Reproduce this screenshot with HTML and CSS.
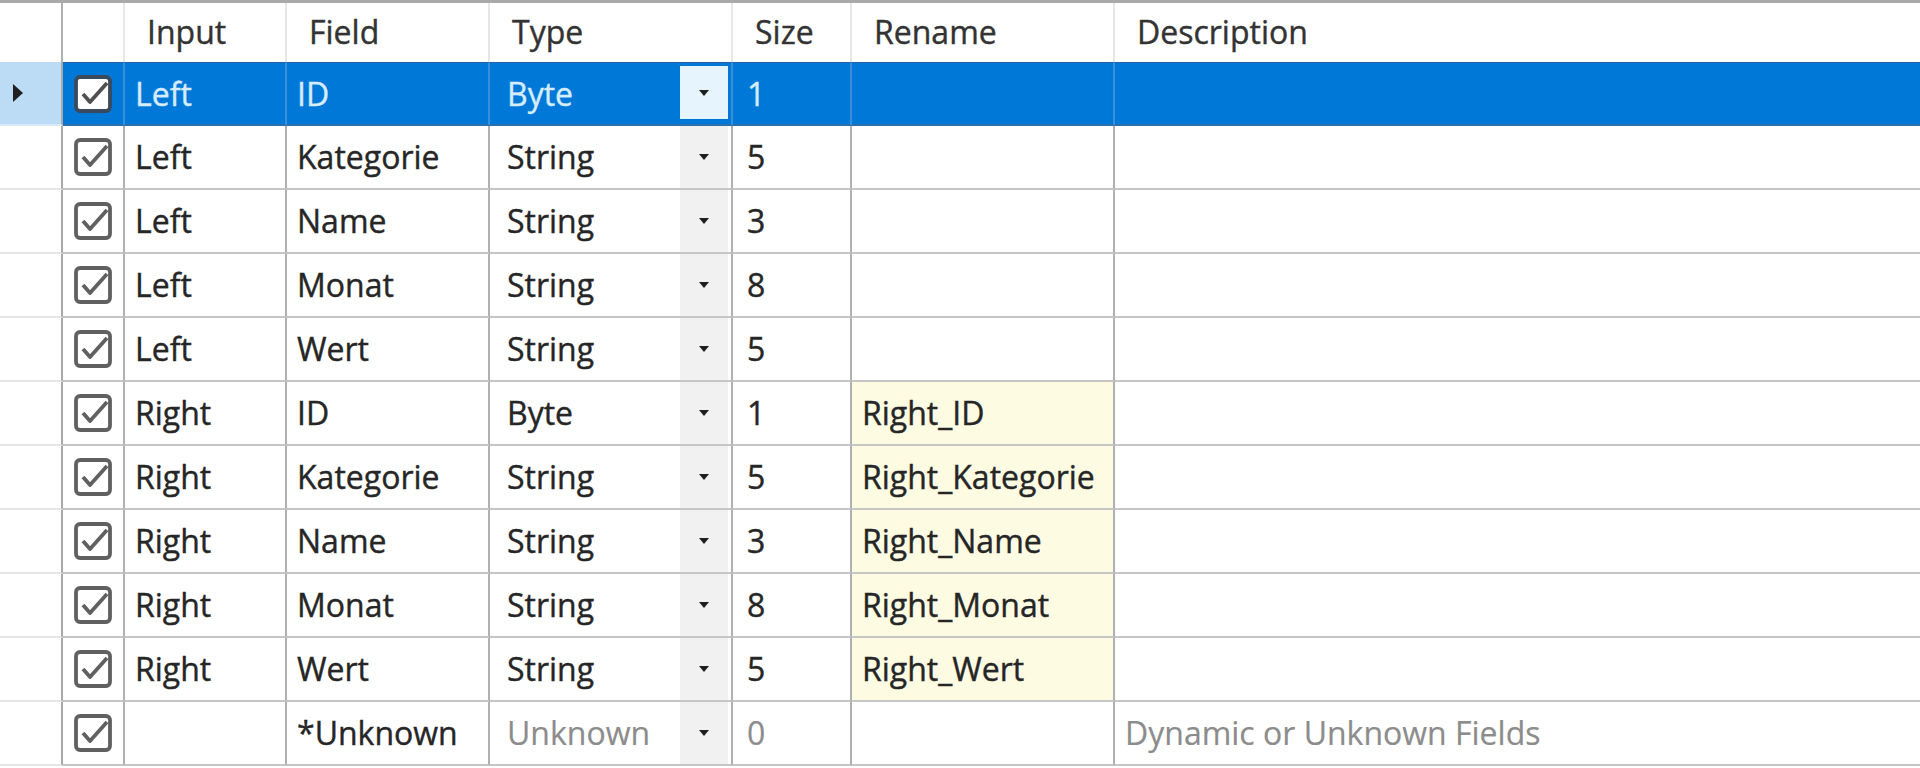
FILE: index.html
```html
<!DOCTYPE html>
<html lang="de">
<head>
<meta charset="utf-8">
<title>Join Fields</title>
<link rel="stylesheet" href="styles.css">
</head>
<body>
<div class="grid">
  <div class="row header">
    <div class="cell rh"></div>
    <div class="cell chk"></div>
    <div class="cell">Input</div>
    <div class="cell">Field</div>
    <div class="cell">Type</div>
    <div class="cell">Size</div>
    <div class="cell">Rename</div>
    <div class="cell last">Description</div>
  </div>

  <div class="row selected">
    <div class="cell rh"><span class="arrow"></span></div>
    <div class="cell chk"><svg class="box" viewBox="0 0 38 38"><rect x="2" y="2" width="34" height="34" rx="4"/><polyline points="9,19 16,27 33,8"/></svg></div>
    <div class="cell">Left</div>
    <div class="cell">ID</div>
    <div class="cell type"><span class="tname">Byte</span><span class="drop"><span class="tri"></span></span></div>
    <div class="cell size">1</div>
    <div class="cell"></div>
    <div class="cell last"></div>
  </div>

  <div class="row">
    <div class="cell rh"></div>
    <div class="cell chk"><svg class="box" viewBox="0 0 38 38"><rect x="2" y="2" width="34" height="34" rx="4"/><polyline points="9,19 16,27 33,8"/></svg></div>
    <div class="cell">Left</div>
    <div class="cell">Kategorie</div>
    <div class="cell type"><span class="tname">String</span><span class="drop"><span class="tri"></span></span></div>
    <div class="cell size">5</div>
    <div class="cell"></div>
    <div class="cell last"></div>
  </div>

  <div class="row">
    <div class="cell rh"></div>
    <div class="cell chk"><svg class="box" viewBox="0 0 38 38"><rect x="2" y="2" width="34" height="34" rx="4"/><polyline points="9,19 16,27 33,8"/></svg></div>
    <div class="cell">Left</div>
    <div class="cell">Name</div>
    <div class="cell type"><span class="tname">String</span><span class="drop"><span class="tri"></span></span></div>
    <div class="cell size">3</div>
    <div class="cell"></div>
    <div class="cell last"></div>
  </div>

  <div class="row">
    <div class="cell rh"></div>
    <div class="cell chk"><svg class="box" viewBox="0 0 38 38"><rect x="2" y="2" width="34" height="34" rx="4"/><polyline points="9,19 16,27 33,8"/></svg></div>
    <div class="cell">Left</div>
    <div class="cell">Monat</div>
    <div class="cell type"><span class="tname">String</span><span class="drop"><span class="tri"></span></span></div>
    <div class="cell size">8</div>
    <div class="cell"></div>
    <div class="cell last"></div>
  </div>

  <div class="row">
    <div class="cell rh"></div>
    <div class="cell chk"><svg class="box" viewBox="0 0 38 38"><rect x="2" y="2" width="34" height="34" rx="4"/><polyline points="9,19 16,27 33,8"/></svg></div>
    <div class="cell">Left</div>
    <div class="cell">Wert</div>
    <div class="cell type"><span class="tname">String</span><span class="drop"><span class="tri"></span></span></div>
    <div class="cell size">5</div>
    <div class="cell"></div>
    <div class="cell last"></div>
  </div>

  <div class="row">
    <div class="cell rh"></div>
    <div class="cell chk"><svg class="box" viewBox="0 0 38 38"><rect x="2" y="2" width="34" height="34" rx="4"/><polyline points="9,19 16,27 33,8"/></svg></div>
    <div class="cell">Right</div>
    <div class="cell">ID</div>
    <div class="cell type"><span class="tname">Byte</span><span class="drop"><span class="tri"></span></span></div>
    <div class="cell size">1</div>
    <div class="cell rename">Right_ID</div>
    <div class="cell last"></div>
  </div>

  <div class="row">
    <div class="cell rh"></div>
    <div class="cell chk"><svg class="box" viewBox="0 0 38 38"><rect x="2" y="2" width="34" height="34" rx="4"/><polyline points="9,19 16,27 33,8"/></svg></div>
    <div class="cell">Right</div>
    <div class="cell">Kategorie</div>
    <div class="cell type"><span class="tname">String</span><span class="drop"><span class="tri"></span></span></div>
    <div class="cell size">5</div>
    <div class="cell rename">Right_Kategorie</div>
    <div class="cell last"></div>
  </div>

  <div class="row">
    <div class="cell rh"></div>
    <div class="cell chk"><svg class="box" viewBox="0 0 38 38"><rect x="2" y="2" width="34" height="34" rx="4"/><polyline points="9,19 16,27 33,8"/></svg></div>
    <div class="cell">Right</div>
    <div class="cell">Name</div>
    <div class="cell type"><span class="tname">String</span><span class="drop"><span class="tri"></span></span></div>
    <div class="cell size">3</div>
    <div class="cell rename">Right_Name</div>
    <div class="cell last"></div>
  </div>

  <div class="row">
    <div class="cell rh"></div>
    <div class="cell chk"><svg class="box" viewBox="0 0 38 38"><rect x="2" y="2" width="34" height="34" rx="4"/><polyline points="9,19 16,27 33,8"/></svg></div>
    <div class="cell">Right</div>
    <div class="cell">Monat</div>
    <div class="cell type"><span class="tname">String</span><span class="drop"><span class="tri"></span></span></div>
    <div class="cell size">8</div>
    <div class="cell rename">Right_Monat</div>
    <div class="cell last"></div>
  </div>

  <div class="row">
    <div class="cell rh"></div>
    <div class="cell chk"><svg class="box" viewBox="0 0 38 38"><rect x="2" y="2" width="34" height="34" rx="4"/><polyline points="9,19 16,27 33,8"/></svg></div>
    <div class="cell">Right</div>
    <div class="cell">Wert</div>
    <div class="cell type"><span class="tname">String</span><span class="drop"><span class="tri"></span></span></div>
    <div class="cell size">5</div>
    <div class="cell rename">Right_Wert</div>
    <div class="cell last"></div>
  </div>

  <div class="row">
    <div class="cell rh"></div>
    <div class="cell chk"><svg class="box" viewBox="0 0 38 38"><rect x="2" y="2" width="34" height="34" rx="4"/><polyline points="9,19 16,27 33,8"/></svg></div>
    <div class="cell"></div>
    <div class="cell">*Unknown</div>
    <div class="cell type"><span class="tname dim">Unknown</span><span class="drop"><span class="tri"></span></span></div>
    <div class="cell size dim">0</div>
    <div class="cell"></div>
    <div class="cell last dim">Dynamic or Unknown Fields</div>
  </div>
</div>
</body>
</html>
```

FILE: styles.css
```css
* {
  box-sizing: border-box;
}

html, body {
  margin: 0;
  padding: 0;
  background: #ffffff;
}

body {
  width: 1920px;
  height: 768px;
  overflow: hidden;
  font-family: "Open Sans", "Noto Sans", "DejaVu Sans", sans-serif;
  font-size: 32px;
  color: #262626;
  -webkit-text-stroke: 0.4px currentColor;
}

.grid {
  display: flex;
  flex-direction: column;
  border-top: 3px solid #a9a9a9;
}

.row {
  display: grid;
  grid-template-columns: 63px 62px 162px 203px 243px 119px 263px 1fr;
  height: 64px;
}

.row.header {
  height: 59px;
}

.cell {
  display: flex;
  align-items: center;
  padding-left: 10px;
  border-right: 2px solid #b0b0b0;
  border-bottom: 2px solid #c6c6c6;
  white-space: nowrap;
  overflow: hidden;
  line-height: 1;
}

.cell.last {
  border-right: none;
}

.header .cell {
  padding-left: 22px;
  border-right-color: #e6e6e6;
  border-bottom: none;
  color: #333333;
  padding-bottom: 2px;
}

.header .cell.rh {
  border-right: 2px solid #b0b0b0;
}

.cell.rh {
  padding-left: 13px;
  border-bottom-color: #e6e6e6;
  border-right-color: #a8a8a8;
}

.cell.chk {
  padding-left: 0;
  justify-content: center;
}

.box {
  width: 38px;
  height: 38px;
  fill: none;
  stroke: #606060;
  stroke-width: 3.8;
  stroke-linejoin: round;
}

.cell.type {
  padding-left: 17px;
  padding-right: 3px;
}

.tname {
  flex: 1;
}

.drop {
  width: 48px;
  align-self: stretch;
  background: #f1f1f1;
  display: flex;
  align-items: center;
  justify-content: center;
}

.tri {
  width: 0;
  height: 0;
  border-left: 5px solid transparent;
  border-right: 5px solid transparent;
  border-top: 6px solid #1e1e1e;
}

.cell.size {
  padding-left: 14px;
}

.cell.rename {
  background: #fdfce3;
}

.dim {
  color: #8c8c8c;
  -webkit-text-stroke: 0.2px currentColor;
}

/* selected row */
.selected .cell {
  background: #0078d7;
  color: #d6ecff;
  border-top: 1px solid #1f63a6;
  border-bottom: 2px solid #2a6fb0;
  border-right-color: #3b8fd8;
}

.selected .cell.rh {
  background: #bcdcf5;
  border-top: none;
  border-bottom: 2px solid #d6eafa;
  border-right-color: #a8a8a8;
}

.selected .box rect {
  fill: #ffffff;
  stroke: #3a4a5c;
}

.selected .box polyline {
  stroke: #505050;
}

.selected .drop {
  background: #e6f4fd;
  margin: 3px 0 5px;
}

.arrow {
  width: 0;
  height: 0;
  border-top: 9px solid transparent;
  border-bottom: 9px solid transparent;
  border-left: 10px solid #202020;
}
```
